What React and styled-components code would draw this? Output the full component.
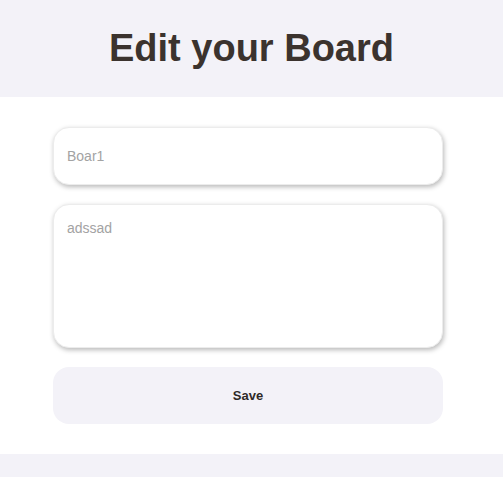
import React from "react";
import styled, { createGlobalStyle } from "styled-components";

const GlobalStyle = createGlobalStyle`
  body {
    margin: 0;
    background: #ffffff;
    font-family: "Liberation Sans", Arial, sans-serif;
  }
`;

const Page = styled.div`
  display: flex;
  flex-direction: column;
  min-height: 477px;
`;

const Header = styled.header`
  display: flex;
  justify-content: center;
  align-items: center;
  height: 97px;
  background: #f3f2f8;
`;

const Title = styled.h1`
  margin: 0;
  font-size: 38px;
  font-weight: 700;
  color: #3b332e;
`;

const Form = styled.form`
  display: flex;
  flex-direction: column;
  gap: 19px;
  width: 390px;
  margin-left: 53px;
  padding: 30px 0;
`;

const fieldBase = `
  box-sizing: border-box;
  width: 100%;
  border: 1px solid #ececec;
  border-radius: 16px;
  background: #fff;
  box-shadow: 1px 2px 5px rgba(0, 0, 0, 0.28);
  font-family: "Liberation Sans", Arial, sans-serif;
  font-size: 14px;
  color: #555;
  outline: none;
  padding: 0 13px;
  &::placeholder {
    color: #a3a3a3;
  }
`;

const Input = styled.input`
  ${fieldBase}
  height: 58px;
`;

const TextArea = styled.textarea`
  ${fieldBase}
  height: 144px;
  padding-top: 15px;
  resize: none;
`;

const SaveButton = styled.button`
  height: 57px;
  border: none;
  border-radius: 16px;
  background: #f3f2f8;
  font-family: "Liberation Sans", Arial, sans-serif;
  font-size: 13px;
  font-weight: 700;
  color: #2f2a27;
  cursor: pointer;
`;

const Footer = styled.footer`
  flex: 1;
  background: #f3f2f8;
`;

export default function App() {
  return (
    <>
      <GlobalStyle />
      <Page>
        <Header>
          <Title>Edit your Board</Title>
        </Header>
        <Form onSubmit={(e) => e.preventDefault()}>
          <Input type="text" placeholder="Boar1" />
          <TextArea placeholder="adssad" />
          <SaveButton type="submit">Save</SaveButton>
        </Form>
        <Footer />
      </Page>
    </>
  );
}
